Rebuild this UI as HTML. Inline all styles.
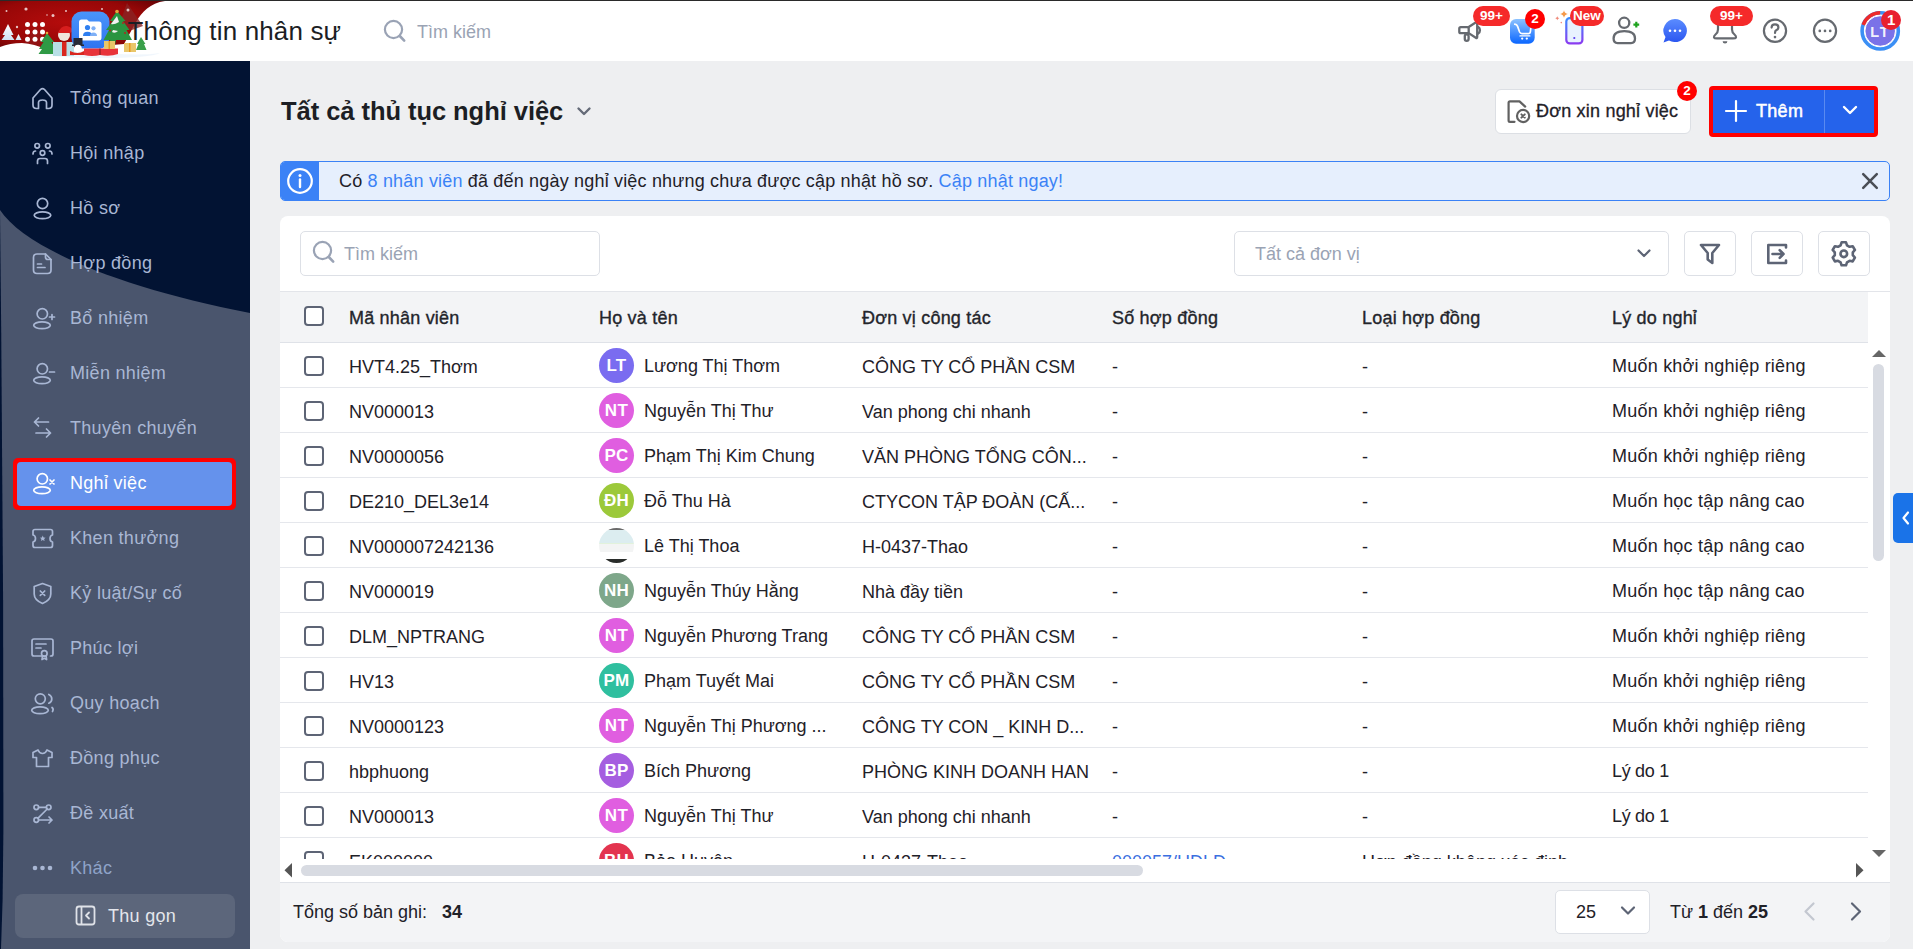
<!DOCTYPE html>
<html><head><meta charset="utf-8"><style>
*{box-sizing:border-box;margin:0;padding:0}
html,body{width:1913px;height:949px;overflow:hidden;background:#eeeff1;font-family:"Liberation Sans",sans-serif;color:#1f2128}
.a{position:absolute}
.t{position:absolute;white-space:nowrap;font-size:18px;line-height:20px}
#hdr{position:absolute;left:0;top:0;width:1913px;height:61px;background:#fff}
#side{position:absolute;left:0;top:61px;width:250px;height:888px;background:#4a556d;overflow:hidden}
.si{position:absolute;left:70px;font-size:18px;line-height:20px;color:#a9b7d4;white-space:nowrap;letter-spacing:0.3px}
.badge{position:absolute;background:#f52a2a;color:#fff;font-weight:700;font-size:13.5px;line-height:20px;height:20px;border-radius:10px;text-align:center;border:0}
.box{position:absolute;background:#fff;border:1px solid #dde0e6;border-radius:6px}
.cb{position:absolute;left:304px;width:20px;height:20px;border:2px solid #5d6475;border-radius:4px;background:#fff}
.av{position:absolute;left:599px;width:35px;height:35px;border-radius:17.5px;color:#fff;font-weight:700;font-size:17px;line-height:35px;text-align:center;letter-spacing:0.3px}
.rl{position:absolute;left:280px;width:1588px;height:1px;background:#e5e7ec}
</style></head><body>
<div id="hdr">
<svg class="a" style="left:0;top:0" width="175" height="61" viewBox="0 0 175 61">
<defs>
<radialGradient id="rg" cx="0.4" cy="0.45" r="0.7"><stop offset="0" stop-color="#b50c0c"/><stop offset="0.7" stop-color="#960707"/><stop offset="1" stop-color="#6a0306"/></radialGradient>
<linearGradient id="lg" x1="0" y1="0" x2="0" y2="1"><stop offset="0" stop-color="#4a95fa"/><stop offset="1" stop-color="#2f74f2"/></linearGradient>
<linearGradient id="tg" x1="0" y1="0" x2="0" y2="1"><stop offset="0" stop-color="#ffffff"/><stop offset="1" stop-color="#cfe3f5"/></linearGradient>
</defs>
<path d="M0 1 H165 C150 3 142 12 136 22 Q130 33 124 44 Q60 50 0 47 Z" fill="url(#rg)"/>
<path d="M127 3 L143 26 L132 30 L118 28 Z" fill="#8a2424" opacity="0.8"/>
<path d="M22 47 L36 26 L48 47 Z" fill="#8f1c1c" opacity="0.6"/>
<g fill="#fff" opacity="0.75"><circle cx="26" cy="9" r="1.6"/><circle cx="6.5" cy="11" r="1"/><circle cx="47" cy="15" r="0.8"/><circle cx="53" cy="15.5" r="1.5"/><circle cx="66" cy="11" r="1"/><circle cx="17" cy="27" r="1.2"/><circle cx="128" cy="10" r="1.5"/><circle cx="102" cy="9" r="1"/></g>
<path d="M0 47 Q10 43 22 43 Q35 44 45 49 Q70 55 100 52 Q125 50 145 52 L175 50 V61 H0 Z" fill="#fff"/>
<path d="M40 53 Q70 49 110 53 Q140 56 160 53 Q150 58 100 58 Q50 58 40 53 Z" fill="#e9f2fb" opacity="0.7"/>
<path d="M8 24 L2.5 35 L5 35 L1.5 40 L14.5 40 L11 35 L13.5 35 Z" fill="url(#tg)"/>
<path d="M18.5 34 L15.5 40 L21.5 40 Z" fill="url(#tg)"/>
<g fill="#fff"><circle cx="27.5" cy="24.4" r="2.5"/><circle cx="35" cy="24.4" r="2.5"/><circle cx="42.5" cy="24.4" r="2.5"/><circle cx="27.5" cy="32" r="2.5"/><circle cx="35" cy="32" r="2.5"/><circle cx="42.5" cy="32" r="2.5"/><circle cx="27.5" cy="39.2" r="2.5"/><circle cx="35" cy="39.2" r="2.5"/><circle cx="42.5" cy="39.2" r="2.5"/></g>
<path d="M47 33 L41 42 L43.5 42 L39 49 L42 49 L38.5 54 L56.5 54 L53 49 L56 49 L51.5 42 L54 42 Z" fill="#2f9a45"/>
<circle cx="47" cy="33" r="1.3" fill="#e4a73a"/>
<rect x="53" y="42" width="21" height="14" fill="#b8dfe6"/><rect x="62" y="42" width="4.5" height="14" fill="#d9261e"/>
<circle cx="64" cy="35" r="6" fill="#f0e6dc"/><path d="M58 33 Q61 25 67 26 Q72 27 73 31 L70 33 Z" fill="#d71e1e"/><circle cx="74" cy="30" r="1.3" fill="#fff"/>
<rect x="71.5" y="11.5" width="38" height="37" rx="10" fill="url(#lg)"/>
<path d="M79 22 Q79 19.5 81.5 19.5 H87 L89 21.5 H99 Q101.5 21.5 101.5 24 V37.5 Q101.5 40.5 99 40.5 H82 Q79 40.5 79 37.5 Z" fill="#fff"/>
<circle cx="87.5" cy="27.5" r="2.6" fill="#2f7ff0"/><circle cx="93.5" cy="28.3" r="2.1" fill="#7fb0f6"/>
<path d="M83 36 Q83 31.8 87.5 31.8 Q92 31.8 92 36 Z" fill="#2f7ff0"/><path d="M90 36 Q90 32.5 93.5 32.5 Q97 32.5 97 36 Z" fill="#7fb0f6"/>
<rect x="73.5" y="38" width="9" height="7" fill="#262a36"/><rect x="72" y="44.5" width="12" height="1.5" fill="#262a36"/><circle cx="78" cy="48.5" r="3.8" fill="#fff"/>
<path d="M70 51 Q78 55 84 51 L84 55 L70 55 Z" fill="#d9261e"/>
<path d="M84 48.5 H118 V54 Q110 57 100 55 Q92 57 84 55 Z" fill="#e8333a"/>
<path d="M100 48.5 V55" stroke="#7a1a1a" stroke-width="1"/>
<path d="M117 11 L110 21 L112.5 21 L106 30 L109 30 L103.5 40 L110 40 L111 45 L115 45 L116 40 L132 40 L126.5 30 L129.5 30 L123 21 L125.5 21 Z" fill="#2a9440"/>
<path d="M117 16 L111 24 Q114 25 119 22 Z M112 32 Q115 34 118 31 L113 30 Z" fill="#f2f2f2"/>
<circle cx="117" cy="11.5" r="1.8" fill="#e4a73a"/>
<g fill="#c41a1a"><circle cx="123" cy="23" r="0.9"/><circle cx="110" cy="30.5" r="0.9"/><circle cx="125" cy="33" r="0.9"/></g>
<rect x="104" y="41" width="11" height="8" fill="#e9c66a"/><rect x="108.5" y="41" width="1.5" height="8" fill="#e79a1e"/>
<rect x="124" y="43" width="12" height="9" fill="#e9c66a"/><rect x="129" y="43" width="1.5" height="9" fill="#e79a1e"/>
<path d="M141 37 L137 44 L138.5 44 L136 50 L146.5 50 L144 44 L145.5 44 Z" fill="#3aa04a"/>
</svg>
<div class="t" style="left:127.5px;top:17px;font-size:26px;line-height:28px;color:#1c1e24;letter-spacing:0.15px">Thông tin nhân sự</div>
<svg class="a" style="left:383px;top:19px" width="24" height="25" viewBox="0 0 24 25"><circle cx="10.5" cy="10.5" r="8.6" fill="none" stroke="#9aa3b5" stroke-width="2.2"/><path d="M16.8 17 L21.2 21.6" stroke="#9aa3b5" stroke-width="2.6" stroke-linecap="round"/></svg>
<div class="t" style="left:417px;top:22px;color:#9aa3b4">Tìm kiếm</div>
<svg class="a" style="left:1450px;top:0" width="463" height="60" viewBox="1450 0 463 60">
<!-- megaphone -->
<g fill="none" stroke="#666a70" stroke-width="2.3" stroke-linejoin="round" stroke-linecap="round">
<rect x="1459.3" y="27.05" width="9.4" height="6.1" rx="1.5"/><path d="M1468.7 27.05 L1477.2 21.5 V37 Q1477.2 38.6 1475.8 37.7 L1468.7 33.15"/><path d="M1478.2 27 A3.9 3.9 0 0 1 1478.2 33.5"/><rect x="1464.8" y="34.3" width="3.8" height="6.6" rx="1.9"/></g>
<!-- cart -->
<defs><linearGradient id="cg" x1="0" y1="0" x2="0" y2="1"><stop offset="0" stop-color="#8cc2ff"/><stop offset="1" stop-color="#0a66ff"/></linearGradient>
<linearGradient id="pg" x1="0" y1="0" x2="0" y2="1"><stop offset="0" stop-color="#3a8cff"/><stop offset="1" stop-color="#8a3cf0"/></linearGradient>
<linearGradient id="mg" x1="0" y1="0" x2="0" y2="1"><stop offset="0" stop-color="#5b8cff"/><stop offset="1" stop-color="#2a55f0"/></linearGradient></defs>
<rect x="1510" y="19.1" width="24.7" height="24.6" rx="6" fill="url(#cg)"/>
<path d="M1514.8 24.2 Q1516.8 24.2 1517.6 26.4 L1519.6 32 Q1520.3 33.6 1522 33.6 H1528.5 Q1530.2 33.6 1530.4 31.5 L1530.8 28" fill="none" stroke="#fff" stroke-width="1.7" stroke-linejoin="round" stroke-linecap="round"/><path d="M1520 35.9 H1529.8" stroke="#fff" stroke-width="1.4" stroke-linecap="round"/>
<circle cx="1522.2" cy="38.6" r="1.15" fill="#fff"/><circle cx="1526.8" cy="38.6" r="1.15" fill="#fff"/>
<!-- phone -->
<rect x="1566.3" y="18.1" width="16.1" height="25.3" rx="3.5" fill="#e8f2ff" stroke="url(#pg)" stroke-width="2.2"/>
<circle cx="1574.3" cy="38" r="1.1" fill="#5a3cf0"/>
<path d="M1564 10.2 Q1564.6 13.3 1567.8 14 Q1564.6 14.7 1564 17.8 Q1563.4 14.7 1560.2 14 Q1563.4 13.3 1564 10.2 Z" fill="#f59a4a"/>
<path d="M1557.3 16.3 Q1557.6 18 1559.3 18.3 Q1557.6 18.6 1557.3 20.3 Q1557 18.6 1555.3 18.3 Q1557 18 1557.3 16.3 Z" fill="#f08a7a"/>
<circle cx="1561.3" cy="22.6" r="0.8" fill="#f08a7a"/>
<!-- person add -->
<g fill="none" stroke="#666a70" stroke-width="2.3">
<circle cx="1624.2" cy="22.8" r="5.1"/><path d="M1613.6 38.5 Q1613.6 31.15 1624.3 31.15 Q1635 31.15 1635 38.5 Q1635 43.05 1631 43.05 H1617.6 Q1613.6 43.05 1613.6 38.5 Z"/>
</g>
<path d="M1633.4 24.6 h5.8 M1636.3 21.7 v5.8" stroke="#1fa31f" stroke-width="2.2"/>
<!-- messenger -->
<path d="M1675 19.1 A12 11.5 0 1 1 1669 40.6 L1663.5 42.6 L1665.5 37.1 A12 11.5 0 0 1 1675 19.1 Z" fill="url(#mg)"/>
<circle cx="1670" cy="30.8" r="1.3" fill="#fff"/><circle cx="1675" cy="30.8" r="1.3" fill="#fff"/><circle cx="1680" cy="30.8" r="1.3" fill="#fff"/>
<!-- bell -->
<path d="M1718 24 Q1718 19 1725 19 Q1732 19 1732 24 V29.5 Q1732 32.5 1734.5 34.5 Q1736.3 36 1736 37.5 Q1735.6 38.4 1733 38.4 H1717 Q1714.4 38.4 1714 37.5 Q1713.7 36 1715.5 34.5 Q1718 32.5 1718 29.5 Z" fill="none" stroke="#666a70" stroke-width="2.2" stroke-linejoin="round"/>
<path d="M1722.6 41.2 A2.4 2.4 0 0 0 1727.4 41.2 Z" fill="#666a70"/>
<!-- help -->
<circle cx="1775" cy="30.8" r="11.1" fill="none" stroke="#666a70" stroke-width="2.2"/>
<path d="M1771.6 27.6 Q1771.6 24.4 1775 24.4 Q1778.4 24.4 1778.4 27.3 Q1778.4 29.3 1776.2 30.3 Q1775 30.9 1775 32.9" fill="none" stroke="#666a70" stroke-width="2.2" stroke-linecap="round"/>
<circle cx="1775" cy="37.1" r="1.3" fill="#666a70"/>
<!-- more -->
<circle cx="1825" cy="30.8" r="11.1" fill="none" stroke="#666a70" stroke-width="2.2"/>
<circle cx="1819.8" cy="30.9" r="1.35" fill="#666a70"/><circle cx="1825" cy="30.9" r="1.35" fill="#666a70"/><circle cx="1830.2" cy="30.9" r="1.35" fill="#666a70"/>
<!-- avatar -->
<circle cx="1880.2" cy="30.9" r="18.1" fill="none" stroke="#3b8ff5" stroke-width="3.6"/>
<path d="M1863.2 24.8 A18.1 18.1 0 0 1 1880.2 12.8" fill="none" stroke="#ee2a2a" stroke-width="3.6"/>
<circle cx="1880.2" cy="31" r="15.3" fill="#7a72e8" stroke="#fff" stroke-width="1"/>
</svg>
<div class="t" style="left:1864px;top:21.6px;width:32px;text-align:center;color:rgba(255,255,255,0.93);font-weight:700;font-size:14.5px;letter-spacing:1.6px;text-indent:0.5px">LT</div>
<div class="badge" style="left:1473px;top:6px;width:37px">99+</div>
<div class="badge" style="left:1525px;top:9px;width:20px;background:#f00">2</div>
<div class="badge" style="left:1570px;top:6px;width:34px">New</div>
<div class="badge" style="left:1710px;top:6px;width:43px">99+</div>
<div class="badge" style="left:1881.2px;top:9.9px;width:20px;background:#e8202e;font-size:15px">1</div>
<div class="a" style="left:0;top:0;width:1913px;height:1px;background:#2a2a2a"></div>
</div>
<div id="side">
<svg class="a" style="left:0;top:0" width="250" height="888" viewBox="0 61 250 888">
<path d="M0 61 H250 V313 C120 288 25 248 0 210 Z" fill="#021333"/>
<path d="M0 210 L1.2 330 L3.1 600 L3.4 830 L2.6 900 L1 949 L0 949 Z" fill="#021333"/>
<rect x="13" y="458" width="223" height="52" rx="5" fill="#ff0000"/>
<rect x="17" y="462" width="215" height="44" rx="4" fill="#6592ec"/>
<rect x="15" y="894" width="220" height="44" rx="8" fill="#5c667b"/>

<g fill="none" stroke="#a9b7d4" stroke-width="1.7" stroke-linecap="round" stroke-linejoin="round">
<!-- home -->
<path d="M33 98 L40.5 89.5 Q42.5 87.5 44.5 89.5 L52 98 V105 Q52 108.5 48.5 108.5 H46.5 V102.5 Q46.5 100 42.5 100 Q38.5 100 38.5 102.5 V108.5 H36.5 Q33 108.5 33 105 Z"/>
<!-- group -->
<circle cx="37.2" cy="145.8" r="2.3"/><circle cx="47.8" cy="145.8" r="2.3"/><circle cx="42.5" cy="153" r="2.3"/>
<path d="M33 154 Q33 151 35.5 151"/><path d="M52 154 Q52 151 49.5 151"/><path d="M37.5 163.5 V161 Q37.5 158.5 40 158.5 H45 Q47.5 158.5 47.5 161 V163.5"/>
<!-- person -->
<circle cx="42.5" cy="203.5" r="5.2"/><ellipse cx="42.5" cy="215.3" rx="8.3" ry="3.4"/>
<!-- doc -->
<path d="M37 254 H45.5 L51 259.5 V270 Q51 273.5 47.5 273.5 H37 Q33.5 273.5 33.5 270 V257.5 Q33.5 254 37 254 Z"/><path d="M45.5 254 V257 Q45.5 259.5 48 259.5 H51"/>
<path d="M37.5 264 H41.5 M37.5 267.5 H45"/>
<!-- bo nhiem -->
<circle cx="42.3" cy="313.8" r="5.2"/><ellipse cx="42" cy="325.3" rx="8.3" ry="3.4"/><path d="M49.5 317 H54.5 M52 314.5 V319.5"/>
<!-- mien nhiem -->
<circle cx="42.3" cy="368.8" r="5.2"/><ellipse cx="42" cy="380.3" rx="8.3" ry="3.4"/><path d="M49.5 372 H54.5"/>
<!-- thuyen chuyen -->
<path d="M48.5 422 H34.5 M38.5 418 L34.5 422 L38.5 426"/><path d="M36 433 H50.5 M46.5 429 L50.5 433 L46.5 437"/>
<!-- khen thuong -->
<path d="M35 529.5 H50.5 Q52.5 529.5 52.5 531.5 V535 Q50 535.5 50 538.5 Q50 541.5 52.5 542 V545.5 Q52.5 547.5 50.5 547.5 H35 Q33 547.5 33 545.5 V542 Q35.5 541.5 35.5 538.5 Q35.5 535.5 33 535 V531.5 Q33 529.5 35 529.5 Z"/>
<path d="M42.7 535.6 L43.6 537.5 L45.6 537.7 L44.1 539 L44.6 541 L42.7 540 L40.9 541 L41.4 539 L39.9 537.7 L41.9 537.5 Z" fill="#a9b7d4" stroke="none"/>
<!-- shield -->
<path d="M42.5 583.5 L50.8 586.5 V594 Q50.8 600 42.5 603.5 Q34.2 600 34.2 594 V586.5 Z"/><path d="M40.3 591 L44.7 595.4 M44.7 591 L40.3 595.4"/>
<!-- certificate -->
<path d="M45 656 H34 Q32 656 32 654 V641 Q32 639 34 639 H51 Q53 639 53 641 V654 Q53 656 51 656 H50.5"/><path d="M36 644 H46 M36 648 H41"/>
<circle cx="44.3" cy="653.5" r="2.8"/><path d="M42.5 656 L42 659.5 L44.3 658.3 L46.6 659.5 L46.1 656"/>
<!-- quy hoach -->
<circle cx="40.3" cy="698.8" r="5"/><ellipse cx="40" cy="710.3" rx="8.3" ry="3.4"/><path d="M48.8 694.5 Q51.8 696 51.8 699 Q51.8 702 48.8 703.2"/><path d="M52 707.5 Q54 709 52.5 711.5"/>
<!-- tshirt -->
<path d="M38 750 L33 752.5 L33 757.5 L36.5 757.5 V766.5 H48.5 V757.5 L52 757.5 V752.5 L47 750 Q45.5 753.5 42.5 753.5 Q39.5 753.5 38 750 Z"/>
<!-- de xuat -->
<circle cx="36.3" cy="807.3" r="2.3"/><circle cx="48.7" cy="807.3" r="2.3"/><circle cx="36.3" cy="820" r="2.3"/>
<path d="M38.6 807.3 H46.4 M47.2 809 L37.8 818.3 M38.6 820 H52 M49 817 L52 820 L49 823"/>
</g>
<g fill="#a9b7d4"><circle cx="35" cy="868" r="2.3"/><circle cx="42.5" cy="868" r="2.3"/><circle cx="50" cy="868" r="2.3"/></g>

<g fill="none" stroke="#fff" stroke-width="1.7" stroke-linecap="round">
<circle cx="42.3" cy="478.8" r="5.2"/><ellipse cx="42" cy="490.3" rx="8.3" ry="3.4"/><path d="M50 480 L54 484 M54 480 L50 484"/>
</g>
<g fill="none" stroke="#dfe2e8" stroke-width="1.8" stroke-linecap="round" stroke-linejoin="round">
<rect x="76.5" y="906.5" width="18" height="18" rx="2.5"/><path d="M81.5 907 V924"/><path d="M89 912.5 L86 915.5 L89 918.5"/>
</g>
</svg>
<div class="si" style="top:26.9px;color:#a9b7d4">Tổng quan</div>
<div class="si" style="top:81.9px;color:#a9b7d4">Hội nhập</div>
<div class="si" style="top:136.9px;color:#a9b7d4">Hồ sơ</div>
<div class="si" style="top:191.9px;color:#a9b7d4">Hợp đồng</div>
<div class="si" style="top:246.9px;color:#a9b7d4">Bổ nhiệm</div>
<div class="si" style="top:301.9px;color:#a9b7d4">Miễn nhiệm</div>
<div class="si" style="top:356.9px;color:#a9b7d4">Thuyên chuyển</div>
<div class="si" style="top:411.9px;color:#fff">Nghỉ việc</div>
<div class="si" style="top:466.9px;color:#a9b7d4">Khen thưởng</div>
<div class="si" style="top:521.9px;color:#a9b7d4">Kỷ luật/Sự cố</div>
<div class="si" style="top:576.9px;color:#a9b7d4">Phúc lợi</div>
<div class="si" style="top:631.9px;color:#a9b7d4">Quy hoạch</div>
<div class="si" style="top:686.9px;color:#a9b7d4">Đồng phục</div>
<div class="si" style="top:741.9px;color:#a9b7d4">Đề xuất</div>
<div class="si" style="top:796.9px;color:#8fa3c8">Khác</div>
<div class="si" style="left:108px;top:844.7px;color:#e4e6ec">Thu gọn</div>
</div>
<div class="t" style="left:281px;top:97px;font-size:25.5px;line-height:28px;font-weight:700;color:#1c1e24;letter-spacing:-0.05px">Tất cả thủ tục nghỉ việc</div>
<svg class="a" style="left:576px;top:104px" width="16" height="14" viewBox="0 0 16 14"><path d="M2.5 4.5 L8 10 L13.5 4.5" fill="none" stroke="#656b78" stroke-width="2.4" stroke-linecap="round" stroke-linejoin="round"/></svg>
<div class="box" style="left:1495px;top:89px;width:196px;height:45px;border-color:#dcdfe4"></div>
<svg class="a" style="left:1505px;top:99px" width="28" height="26" viewBox="0 0 28 26">
<path d="M9.5 22.8 H5 Q3.6 22.8 3.6 21.4 V3.8 Q3.6 2.4 5 2.4 H14.5 L20.2 7.6" fill="none" stroke="#616161" stroke-width="2.2" stroke-linecap="round" stroke-linejoin="round"/>
<circle cx="18.1" cy="17" r="6.1" fill="#fff" stroke="#616161" stroke-width="2.2"/>
<path d="M16.4 15.3 L19.8 18.7 M19.8 15.3 L16.4 18.7" stroke="#616161" stroke-width="1.9" stroke-linecap="round"/>
</svg>
<div class="t" style="left:1536px;top:101px;color:#1f2128;-webkit-text-stroke:0.3px #1f2128;letter-spacing:0.2px">Đơn xin nghỉ việc</div>
<div class="badge" style="left:1677px;top:81px;width:20px;background:#f00">2</div>
<div class="a" style="left:1709px;top:86px;width:169px;height:51px;background:#ff0000;border-radius:4px"></div>
<div class="a" style="left:1713px;top:90px;width:161px;height:43px;background:#2563eb"></div>
<div class="a" style="left:1824px;top:90px;width:1px;height:43px;background:#5a8af0"></div>
<svg class="a" style="left:1724px;top:99px" width="24" height="24" viewBox="0 0 24 24"><path d="M12 2 V22 M2 12 H22" stroke="#fff" stroke-width="2.2" stroke-linecap="round"/></svg>
<div class="t" style="left:1756px;top:101px;color:#fff;-webkit-text-stroke:0.5px #fff;letter-spacing:0.3px">Thêm</div>
<svg class="a" style="left:1841px;top:103px" width="18" height="14" viewBox="0 0 18 14"><path d="M3 4 L9 10 L15 4" fill="none" stroke="#fff" stroke-width="2.4" stroke-linecap="round" stroke-linejoin="round"/></svg>
<div class="a" style="left:280px;top:161px;width:1610px;height:40px;background:#e6effd;border:1px solid #3b82f6;border-radius:5px;overflow:hidden"><div class="a" style="left:-1px;top:-1px;width:39px;height:40px;background:#3b82f6"></div></div>
<svg class="a" style="left:286px;top:167px" width="28" height="28" viewBox="0 0 28 28"><circle cx="14" cy="14" r="11.8" fill="none" stroke="#fff" stroke-width="2.2"/><circle cx="14" cy="8.6" r="1.5" fill="#fff"/><path d="M14 12.5 V20" stroke="#fff" stroke-width="2.4" stroke-linecap="round"/></svg>
<div class="t" style="left:339px;top:171px;color:#1f2128;letter-spacing:0.18px">Có <span style="color:#3b82f6">8 nhân viên</span> đã đến ngày nghỉ việc nhưng chưa được cập nhật hồ sơ. <span style="color:#3b82f6">Cập nhật ngay!</span></div>
<svg class="a" style="left:1860px;top:171px" width="20" height="20" viewBox="0 0 20 20"><path d="M3.2 3.2 L16.8 16.8 M16.8 3.2 L3.2 16.8" stroke="#4a4e56" stroke-width="2.5" stroke-linecap="round"/></svg>
<div class="a" style="left:280px;top:216px;width:1610px;height:726px;background:#fff;border-radius:8px;overflow:hidden">
</div>
<div class="box" style="left:300px;top:231px;width:300px;height:45px;border-color:#dde0e6;border-radius:5px"></div>
<svg class="a" style="left:312px;top:240px" width="24" height="25" viewBox="0 0 24 25"><circle cx="10.5" cy="10.5" r="8.6" fill="none" stroke="#9aa3b5" stroke-width="2.2"/><path d="M16.8 17 L21.2 21.6" stroke="#9aa3b5" stroke-width="2.6" stroke-linecap="round"/></svg>
<div class="t" style="left:344px;top:243.5px;color:#9aa3b4">Tìm kiếm</div>
<div class="box" style="left:1234px;top:231px;width:435px;height:45px;border-color:#dde0e6;border-radius:5px"></div>
<div class="t" style="left:1255px;top:243.5px;color:#9aa3b4">Tất cả đơn vị</div>
<svg class="a" style="left:1636px;top:247px" width="16" height="14" viewBox="0 0 16 14"><path d="M2.5 3.5 L8 9 L13.5 3.5" fill="none" stroke="#5d6475" stroke-width="2.2" stroke-linecap="round" stroke-linejoin="round"/></svg>
<div class="box" style="left:1684px;top:231px;width:52px;height:45px;border-color:#dde0e6;border-radius:5px"></div>
<div class="box" style="left:1751px;top:231px;width:52px;height:45px;border-color:#dde0e6;border-radius:5px"></div>
<div class="box" style="left:1818px;top:231px;width:52px;height:45px;border-color:#dde0e6;border-radius:5px"></div>
<svg class="a" style="left:1684px;top:231px" width="186" height="45" viewBox="1684 231 186 45">
<g fill="none" stroke="#5d6475" stroke-width="2.6" stroke-linejoin="round" stroke-linecap="round">
<path d="M1701 245 H1719 L1712.3 253 V263 L1707.7 259.5 V253 Z"/>
<path d="M1786 247.5 V245 H1768.3 V263 H1786 V260.5"/><path d="M1772.5 254 H1783.5 M1779.7 250.2 L1783.5 254 L1779.7 257.8"/>
<circle cx="1843.8" cy="253.8" r="3.3"/>
<path d="M1841.6 242.3 L1846 242.3 L1847 245.3 L1849.6 246.8 L1852.7 246.2 L1854.9 250 L1852.8 252.4 V255.2 L1854.9 257.6 L1852.7 261.4 L1849.6 260.8 L1847 262.3 L1846 265.3 H1841.6 L1840.6 262.3 L1838 260.8 L1834.9 261.4 L1832.7 257.6 L1834.8 255.2 V252.4 L1832.7 250 L1834.9 246.2 L1838 246.8 L1840.6 245.3 Z"/>
</g></svg>
<div class="a" style="left:280px;top:291px;width:1610px;height:1px;background:#e3e5ea"></div>
<div class="a" style="left:280px;top:292px;width:1588px;height:50px;background:#f3f4f6"></div>
<div class="a" style="left:280px;top:342px;width:1588px;height:1px;background:#dfe2e8"></div>
<div class="cb" style="top:306px"></div>
<div class="t" style="left:349px;top:307.7px;color:#23252b;-webkit-text-stroke:0.35px #23252b;letter-spacing:0.2px">Mã nhân viên</div>
<div class="t" style="left:599px;top:307.7px;color:#23252b;-webkit-text-stroke:0.35px #23252b;letter-spacing:0.2px">Họ và tên</div>
<div class="t" style="left:862px;top:307.7px;color:#23252b;-webkit-text-stroke:0.35px #23252b;letter-spacing:0.2px">Đơn vị công tác</div>
<div class="t" style="left:1112px;top:307.7px;color:#23252b;-webkit-text-stroke:0.35px #23252b;letter-spacing:0.2px">Số hợp đồng</div>
<div class="t" style="left:1362px;top:307.7px;color:#23252b;-webkit-text-stroke:0.35px #23252b;letter-spacing:0.2px">Loại hợp đồng</div>
<div class="t" style="left:1612px;top:307.7px;color:#23252b;-webkit-text-stroke:0.35px #23252b;letter-spacing:0.2px">Lý do nghỉ</div>
<div class="a" style="left:280px;top:343px;width:1588px;height:516px;overflow:hidden">
<div class="cb" style="left:24px;top:13px"></div>
<div class="t" style="left:69px;top:13.7px">HVT4.25_Thơm</div>
<div class="av" style="left:319px;top:4.5px;background:#7a6cf0">LT</div>
<div class="t" style="left:364px;top:12.7px">Lương Thị Thơm</div>
<div class="t" style="left:582px;top:13.7px">CÔNG TY CỔ PHẦN CSM</div>
<div class="t" style="left:832px;top:13.7px">-</div>
<div class="t" style="left:1082px;top:13.7px">-</div>
<div class="t" style="left:1332px;top:12.7px;letter-spacing:0.22px">Muốn khởi nghiệp riêng</div>
<div class="a" style="left:0;top:44px;width:1588px;height:1px;background:#e5e7ec"></div>
<div class="cb" style="left:24px;top:58px"></div>
<div class="t" style="left:69px;top:58.7px">NV000013</div>
<div class="av" style="left:319px;top:49.5px;background:#e05ee0">NT</div>
<div class="t" style="left:364px;top:57.7px">Nguyễn Thị Thư</div>
<div class="t" style="left:582px;top:58.7px">Van phong chi nhanh</div>
<div class="t" style="left:832px;top:58.7px">-</div>
<div class="t" style="left:1082px;top:58.7px">-</div>
<div class="t" style="left:1332px;top:57.7px;letter-spacing:0.22px">Muốn khởi nghiệp riêng</div>
<div class="a" style="left:0;top:89px;width:1588px;height:1px;background:#e5e7ec"></div>
<div class="cb" style="left:24px;top:103px"></div>
<div class="t" style="left:69px;top:103.7px">NV0000056</div>
<div class="av" style="left:319px;top:94.5px;background:#e05ee0">PC</div>
<div class="t" style="left:364px;top:102.7px">Phạm Thị Kim Chung</div>
<div class="t" style="left:582px;top:103.7px">VĂN PHÒNG TỔNG CÔN...</div>
<div class="t" style="left:832px;top:103.7px">-</div>
<div class="t" style="left:1082px;top:103.7px">-</div>
<div class="t" style="left:1332px;top:102.7px;letter-spacing:0.22px">Muốn khởi nghiệp riêng</div>
<div class="a" style="left:0;top:134px;width:1588px;height:1px;background:#e5e7ec"></div>
<div class="cb" style="left:24px;top:148px"></div>
<div class="t" style="left:69px;top:148.7px">DE210_DEL3e14</div>
<div class="av" style="left:319px;top:139.5px;background:#9cc93a">ĐH</div>
<div class="t" style="left:364px;top:147.7px">Đỗ Thu Hà</div>
<div class="t" style="left:582px;top:148.7px">CTYCON TẬP ĐOÀN (CẤ...</div>
<div class="t" style="left:832px;top:148.7px">-</div>
<div class="t" style="left:1082px;top:148.7px">-</div>
<div class="t" style="left:1332px;top:147.7px;letter-spacing:0.22px">Muốn học tập nâng cao</div>
<div class="a" style="left:0;top:179px;width:1588px;height:1px;background:#e5e7ec"></div>
<div class="cb" style="left:24px;top:193px"></div>
<div class="t" style="left:69px;top:193.7px">NV000007242136</div>
<div class="a" style="left:319px;top:184.5px;width:35px;height:35px;border-radius:17.5px;overflow:hidden;background:#fff"><div class="a" style="left:0;top:0;width:35px;height:2.5px;background:#6a6a6a"></div><div class="a" style="left:0;top:2.5px;width:35px;height:12.5px;background:#dcedf0"></div><div class="a" style="left:0;top:15px;width:35px;height:1.5px;background:#e2f2dc"></div><div class="a" style="left:0;top:16.5px;width:35px;height:8px;background:#f3f4f4"></div><div class="a" style="left:0;top:31px;width:35px;height:4px;background:#2a2d2b"></div></div>
<div class="t" style="left:364px;top:192.7px">Lê Thị Thoa</div>
<div class="t" style="left:582px;top:193.7px">H-0437-Thao</div>
<div class="t" style="left:832px;top:193.7px">-</div>
<div class="t" style="left:1082px;top:193.7px">-</div>
<div class="t" style="left:1332px;top:192.7px;letter-spacing:0.22px">Muốn học tập nâng cao</div>
<div class="a" style="left:0;top:224px;width:1588px;height:1px;background:#e5e7ec"></div>
<div class="cb" style="left:24px;top:238px"></div>
<div class="t" style="left:69px;top:238.7px">NV000019</div>
<div class="av" style="left:319px;top:229.5px;background:#7ea78a">NH</div>
<div class="t" style="left:364px;top:237.7px">Nguyễn Thúy Hằng</div>
<div class="t" style="left:582px;top:238.7px">Nhà đầy tiền</div>
<div class="t" style="left:832px;top:238.7px">-</div>
<div class="t" style="left:1082px;top:238.7px">-</div>
<div class="t" style="left:1332px;top:237.7px;letter-spacing:0.22px">Muốn học tập nâng cao</div>
<div class="a" style="left:0;top:269px;width:1588px;height:1px;background:#e5e7ec"></div>
<div class="cb" style="left:24px;top:283px"></div>
<div class="t" style="left:69px;top:283.7px">DLM_NPTRANG</div>
<div class="av" style="left:319px;top:274.5px;background:#e05ee0">NT</div>
<div class="t" style="left:364px;top:282.7px">Nguyễn Phương Trang</div>
<div class="t" style="left:582px;top:283.7px">CÔNG TY CỔ PHẦN CSM</div>
<div class="t" style="left:832px;top:283.7px">-</div>
<div class="t" style="left:1082px;top:283.7px">-</div>
<div class="t" style="left:1332px;top:282.7px;letter-spacing:0.22px">Muốn khởi nghiệp riêng</div>
<div class="a" style="left:0;top:314px;width:1588px;height:1px;background:#e5e7ec"></div>
<div class="cb" style="left:24px;top:328px"></div>
<div class="t" style="left:69px;top:328.7px">HV13</div>
<div class="av" style="left:319px;top:319.5px;background:#2fbf9f">PM</div>
<div class="t" style="left:364px;top:327.7px">Phạm Tuyết Mai</div>
<div class="t" style="left:582px;top:328.7px">CÔNG TY CỔ PHẦN CSM</div>
<div class="t" style="left:832px;top:328.7px">-</div>
<div class="t" style="left:1082px;top:328.7px">-</div>
<div class="t" style="left:1332px;top:327.7px;letter-spacing:0.22px">Muốn khởi nghiệp riêng</div>
<div class="a" style="left:0;top:359px;width:1588px;height:1px;background:#e5e7ec"></div>
<div class="cb" style="left:24px;top:373px"></div>
<div class="t" style="left:69px;top:373.7px">NV0000123</div>
<div class="av" style="left:319px;top:364.5px;background:#e05ee0">NT</div>
<div class="t" style="left:364px;top:372.7px">Nguyễn Thị Phương ...</div>
<div class="t" style="left:582px;top:373.7px">CÔNG TY CON _ KINH D...</div>
<div class="t" style="left:832px;top:373.7px">-</div>
<div class="t" style="left:1082px;top:373.7px">-</div>
<div class="t" style="left:1332px;top:372.7px;letter-spacing:0.22px">Muốn khởi nghiệp riêng</div>
<div class="a" style="left:0;top:404px;width:1588px;height:1px;background:#e5e7ec"></div>
<div class="cb" style="left:24px;top:418px"></div>
<div class="t" style="left:69px;top:418.7px">hbphuong</div>
<div class="av" style="left:319px;top:409.5px;background:#a55ee0">BP</div>
<div class="t" style="left:364px;top:417.7px">Bích Phương</div>
<div class="t" style="left:582px;top:418.7px">PHÒNG KINH DOANH HAN</div>
<div class="t" style="left:832px;top:418.7px">-</div>
<div class="t" style="left:1082px;top:418.7px">-</div>
<div class="t" style="left:1332px;top:417.7px;letter-spacing:-0.3px">Lý do 1</div>
<div class="a" style="left:0;top:449px;width:1588px;height:1px;background:#e5e7ec"></div>
<div class="cb" style="left:24px;top:463px"></div>
<div class="t" style="left:69px;top:463.7px">NV000013</div>
<div class="av" style="left:319px;top:454.5px;background:#e05ee0">NT</div>
<div class="t" style="left:364px;top:462.7px">Nguyễn Thị Thư</div>
<div class="t" style="left:582px;top:463.7px">Van phong chi nhanh</div>
<div class="t" style="left:832px;top:463.7px">-</div>
<div class="t" style="left:1082px;top:463.7px">-</div>
<div class="t" style="left:1332px;top:462.7px;letter-spacing:-0.3px">Lý do 1</div>
<div class="a" style="left:0;top:494px;width:1588px;height:1px;background:#e5e7ec"></div>
<div class="cb" style="left:24px;top:508px"></div>
<div class="t" style="left:69px;top:508.7px">EK000000</div>
<div class="av" style="left:319px;top:499.5px;background:#e3344f">BH</div>
<div class="t" style="left:364px;top:507.7px">Bảo Huyên</div>
<div class="t" style="left:582px;top:508.7px">H-0437-Thao</div>
<div class="t" style="left:832px;top:508.7px;color:#3b6fe0">000057/HĐLĐ</div>
<div class="t" style="left:1082px;top:508.7px">Hợp đồng không xác định</div>
<div class="a" style="left:0;top:539px;width:1588px;height:1px;background:#e5e7ec"></div>
</div>
<svg class="a" style="left:1868px;top:343px" width="22" height="520" viewBox="1868 343 22 520"><path d="M1872 357 L1879 350 L1886 357 Z" fill="#666"/><rect x="1873" y="364" width="11" height="197" rx="5.5" fill="#d8dbe2"/><path d="M1872 850 L1886 850 L1879 857 Z" fill="#666"/></svg>
<svg class="a" style="left:280px;top:859px" width="1610" height="23" viewBox="280 859 1610 23"><path d="M292 863 L292 877.5 L284.5 870.2 Z" fill="#555"/><rect x="301" y="865" width="842" height="11" rx="5.5" fill="#d8dbe2"/><path d="M1856 863 L1856 877.5 L1863.5 870.2 Z" fill="#555"/></svg>
<div class="a" style="left:280px;top:882px;width:1610px;height:60px;background:#f3f4f6;border-top:1px solid #dfe2e8;border-radius:0 0 8px 8px"></div>
<div class="t" style="left:293px;top:901.7px;color:#1f2128">Tổng số bản ghi: <b style="margin-left:10px">34</b></div>
<div class="box" style="left:1555px;top:890px;width:95px;height:44px;border-color:#dde0e6;border-radius:5px"></div>
<div class="t" style="left:1576px;top:901.7px">25</div>
<svg class="a" style="left:1619px;top:904px" width="18" height="14" viewBox="0 0 18 14"><path d="M3 3.5 L9 9.5 L15 3.5" fill="none" stroke="#5d6475" stroke-width="2.2" stroke-linecap="round" stroke-linejoin="round"/></svg>
<div class="t" style="left:1670px;top:901.7px">Từ <b>1</b> đến <b>25</b></div>
<svg class="a" style="left:1798px;top:900px" width="70" height="24" viewBox="1798 900 70 24"><path d="M1813.5 903.5 L1805.5 911.5 L1813.5 919.5" fill="none" stroke="#c3c7d0" stroke-width="2.2" stroke-linecap="round" stroke-linejoin="round"/><path d="M1852 903.5 L1860 911.5 L1852 919.5" fill="none" stroke="#5d6475" stroke-width="2.2" stroke-linecap="round" stroke-linejoin="round"/></svg>
<div class="a" style="left:1893px;top:493px;width:22px;height:50px;background:#1a73e8;border-radius:5px 0 0 5px"></div>
<svg class="a" style="left:1900px;top:510px" width="12" height="16" viewBox="0 0 12 16"><path d="M8 2.5 L3.5 8 L8 13.5" fill="none" stroke="#fff" stroke-width="2.2" stroke-linecap="round" stroke-linejoin="round"/></svg>
</body></html>
